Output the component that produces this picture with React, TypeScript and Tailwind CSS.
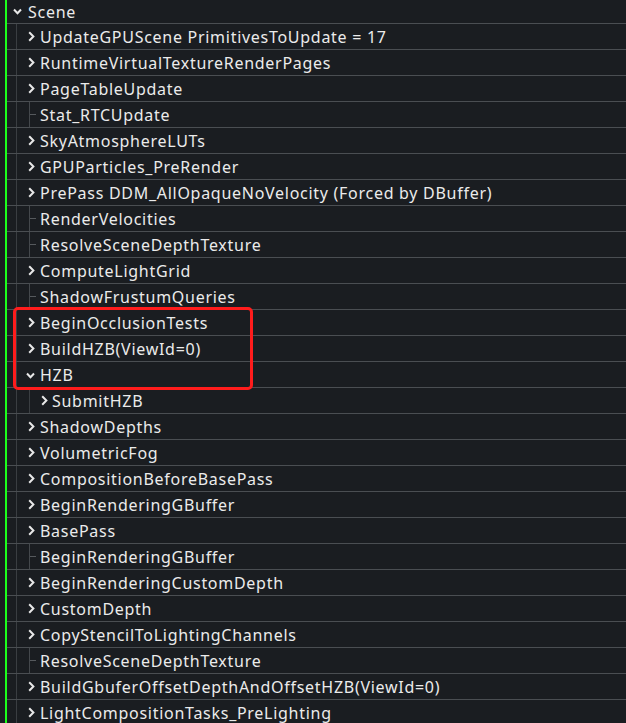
import React from 'react';

type Row = { label: string; kind: 'closed' | 'open' | 'leaf'; depth?: number };

const rows: Row[] = [
  { label: 'UpdateGPUScene PrimitivesToUpdate = 17', kind: 'closed' },
  { label: 'RuntimeVirtualTextureRenderPages', kind: 'closed' },
  { label: 'PageTableUpdate', kind: 'closed' },
  { label: 'Stat_RTCUpdate', kind: 'leaf' },
  { label: 'SkyAtmosphereLUTs', kind: 'closed' },
  { label: 'GPUParticles_PreRender', kind: 'closed' },
  { label: 'PrePass DDM_AllOpaqueNoVelocity (Forced by DBuffer)', kind: 'closed' },
  { label: 'RenderVelocities', kind: 'leaf' },
  { label: 'ResolveSceneDepthTexture', kind: 'leaf' },
  { label: 'ComputeLightGrid', kind: 'closed' },
  { label: 'ShadowFrustumQueries', kind: 'leaf' },
  { label: 'BeginOcclusionTests', kind: 'closed' },
  { label: 'BuildHZB(ViewId=0)', kind: 'closed' },
  { label: 'HZB', kind: 'open' },
  { label: 'SubmitHZB', kind: 'closed', depth: 2 },
  { label: 'ShadowDepths', kind: 'closed' },
  { label: 'VolumetricFog', kind: 'closed' },
  { label: 'CompositionBeforeBasePass', kind: 'closed' },
  { label: 'BeginRenderingGBuffer', kind: 'closed' },
  { label: 'BasePass', kind: 'closed' },
  { label: 'BeginRenderingGBuffer', kind: 'leaf' },
  { label: 'BeginRenderingCustomDepth', kind: 'closed' },
  { label: 'CustomDepth', kind: 'closed' },
  { label: 'CopyStencilToLightingChannels', kind: 'closed' },
  { label: 'ResolveSceneDepthTexture', kind: 'leaf' },
  { label: 'BuildGbuferOffsetDepthAndOffsetHZB(ViewId=0)', kind: 'closed' },
  { label: 'LightCompositionTasks_PreLighting', kind: 'closed' },
];

const ChevronRight = () => (
  <svg width="7" height="11" viewBox="0 0 7 11" className="shrink-0">
    <path d="M1.2 1.2 L5.4 5.5 L1.2 9.8" fill="none" stroke="#e8e8e8" strokeWidth="2" />
  </svg>
);

const ChevronDown = () => (
  <svg width="9" height="7" viewBox="0 0 9 7" className="shrink-0">
    <path d="M1 1.5 L4.5 5.2 L8 1.5" fill="none" stroke="#e8e8e8" strokeWidth="2" />
  </svg>
);

const Guide = () => <div className="w-[10px] h-full shrink-0 border-r border-[#3a3e42]" />;

const Branch = () => (
  <div className="w-[19px] h-full shrink-0 flex">
    <div className="w-[12px] h-full" />
    <div className="w-px h-full bg-[#44484c]" />
    <div className="w-[6px] h-px bg-[#55595d] self-center" />
  </div>
);

const TreeRow: React.FC<{ row: Row }> = ({ row }) => {
  const { label, kind, depth = 1 } = row;
  return (
    <div className="h-[26px] flex items-center border-b border-[#4a4e52] shrink-0">
      <Guide />
      {depth === 2 ? (
        <>
          <div className="w-[13px] h-full shrink-0 border-r border-[#3a3e42]" />
          <div className="w-[18px] flex items-center shrink-0 pl-[11px]">
            <ChevronRight />
          </div>
        </>
      ) : kind === 'leaf' ? (
        <Branch />
      ) : (
        <div className="w-[19px] flex items-center shrink-0 pl-[11px]">
          {kind === 'open' ? <div className="-ml-[2px] pt-[1px]"><ChevronDown /></div> : <ChevronRight />}
        </div>
      )}
      <span className="pl-[4px] text-[16px] tracking-[0.72px] text-[#ebebeb] whitespace-nowrap leading-none">{label}</span>
    </div>
  );
};

export default function App() {
  return (
    <div
      className="relative w-[626px] h-[723px] overflow-hidden bg-[#1a1d21] flex"
      style={{ fontFamily: '"Noto Sans", "Liberation Sans", sans-serif' }}
    >
      <div className="w-[5px] shrink-0" />
      <div className="w-[2px] shrink-0 bg-[#1cff1c]" />
      <div className="flex-1 flex flex-col">
        <div className="h-[24px] flex items-center border-b border-[#4a4e52] shrink-0 pl-[6px]">
          <ChevronDown />
          <span className="pl-[6px] text-[16px] tracking-[0.72px] text-[#ebebeb] leading-none">Scene</span>
        </div>
        {rows.map((r, i) => (
          <TreeRow key={i} row={r} />
        ))}
      </div>
      <div className="absolute left-[13px] top-[307px] w-[240px] h-[83px] border-[3px] border-[#ff1c1c] rounded-[5px]" />
    </div>
  );
}
